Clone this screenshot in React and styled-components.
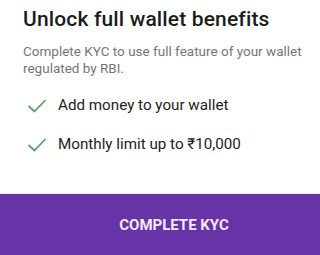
import React from 'react';
import styled, { createGlobalStyle } from 'styled-components';

const Global = createGlobalStyle`
  html, body { margin: 0; padding: 0; background: #fff; }
  body { font-family: Roboto, "Noto Sans", Arial, sans-serif; }
`;

const Sheet = styled.div`
  width: 320px;
  height: 255px;
  display: flex;
  flex-direction: column;
  overflow: hidden;
  background: #fff;
`;

const Body = styled.div`
  flex: 1;
  padding: 6px 0 0 23px;
  border-bottom: 1px solid #f6e8f3;
`;

const Title = styled.h1`
  margin: 0;
  font-size: 21px;
  font-weight: 500;
  color: #1c1c1c;
  line-height: 26px;
  letter-spacing: 0.15px;
`;

const Subtitle = styled.p`
  margin: 11px 0 0;
  font-size: 13.5px;
  line-height: 17px;
  color: #767676;
  width: 290px;
`;

const List = styled.ul`
  list-style: none;
  margin: 19px 0 0;
  padding: 0;
  display: flex;
  flex-direction: column;
  gap: 20px;
`;

const Item = styled.li`
  display: flex;
  align-items: center;
  gap: 11px;
  font-size: 15.2px;
  line-height: 19px;
  color: #222;
`;

const Check = styled.svg`
  width: 20px;
  height: 16px;
  margin-left: 4px;
  flex: none;
`;

const Button = styled.button`
  height: 61px;
  flex: none;
  border: none;
  background: #6634a6;
  color: #f6e6f6;
  font-family: Roboto, Arial, sans-serif;
  font-weight: 700;
  font-size: 15px;
  letter-spacing: 0;
  padding: 0 0 0 28px;
  text-align: center;
`;

const Tick = () => (
  <Check viewBox="0 0 20 16">
    <path d="M2 8.5 L7.5 13.5 L18 2.5" fill="none" stroke="#57a16a" strokeWidth="1.8" strokeLinecap="round" strokeLinejoin="round" />
  </Check>
);

const items = ['Add money to your wallet', 'Monthly limit up to ₹10,000'];

export default function App() {
  return (
    <>
      <Global />
      <Sheet>
        <Body>
          <Title>Unlock full wallet benefits</Title>
          <Subtitle>Complete KYC to use full feature of your wallet regulated by RBI.</Subtitle>
          <List>
            {items.map((t) => (
              <Item key={t}>
                <Tick />
                {t}
              </Item>
            ))}
          </List>
        </Body>
        <Button>COMPLETE KYC</Button>
      </Sheet>
    </>
  );
}
